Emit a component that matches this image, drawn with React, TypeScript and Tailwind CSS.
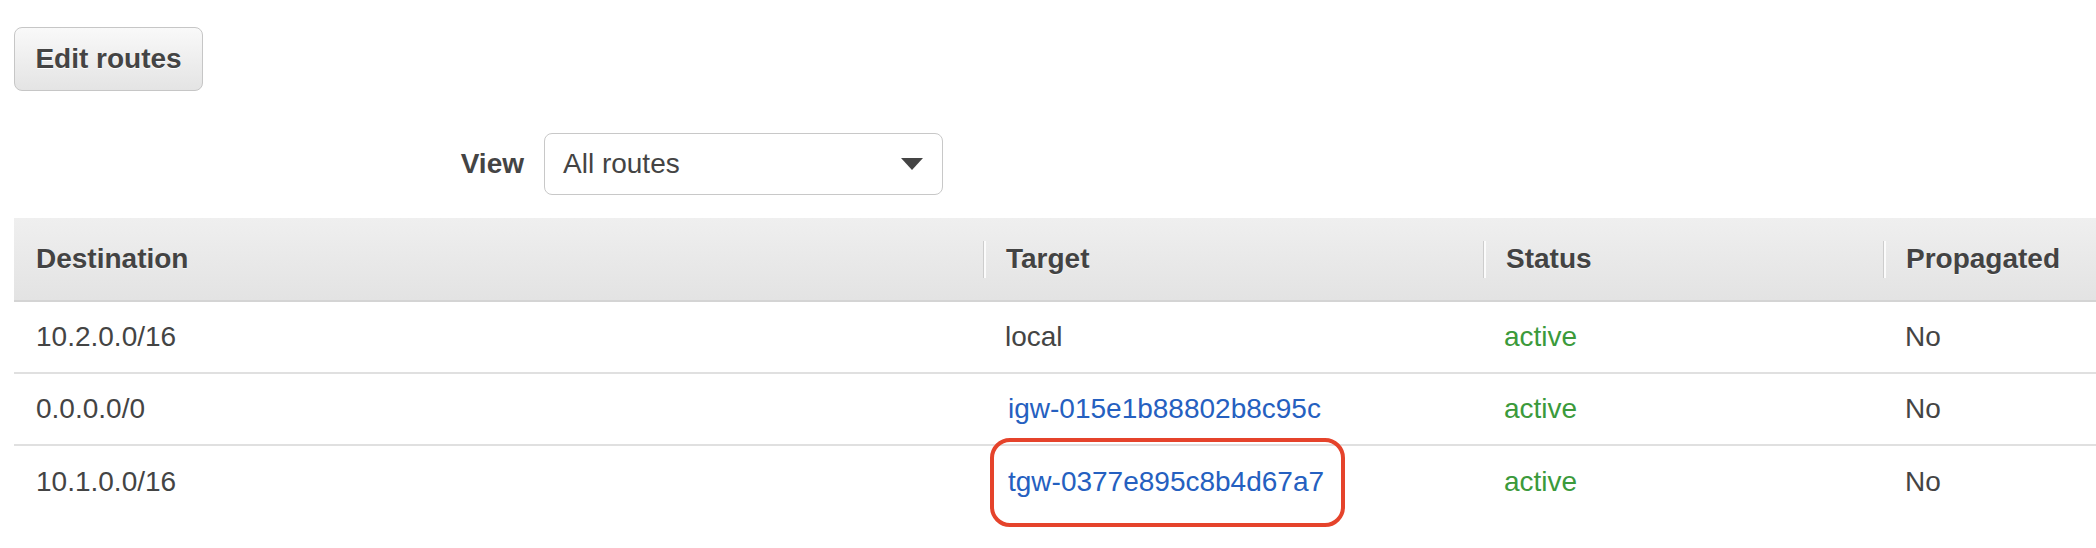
import React from "react";

type Row = {
  dest: string;
  target: string;
  link: boolean;
  highlight?: boolean;
};

const rows: Row[] = [
  { dest: "10.2.0.0/16", target: "local", link: false },
  { dest: "0.0.0.0/0", target: "igw-015e1b88802b8c95c", link: true },
  { dest: "10.1.0.0/16", target: "tgw-0377e895c8b4d67a7", link: true, highlight: true },
];

function HeaderCell({ label, sep }: { label: string; sep: boolean }) {
  return (
    <div className="flex h-full items-center">
      {sep ? (
        <div className="flex h-[37px]">
          <div className="h-full w-px bg-[#cdcdcd]" />
          <div className="h-full w-[2px] bg-[#fbfbfb]" />
        </div>
      ) : null}
      <span
        className={
          sep
            ? "ml-[20px] text-[28px] font-bold leading-none text-[#434343] [text-shadow:0_1px_0_#f6f6f6]"
            : "ml-[22px] text-[28px] font-bold leading-none text-[#434343] [text-shadow:0_1px_0_#f6f6f6]"
        }
      >
        {label}
      </span>
    </div>
  );
}

export default function App() {
  return (
    <div className="h-[548px] w-full overflow-hidden bg-white font-['Liberation_Sans',Arial,sans-serif] text-[#444]">
      <div className="pl-[14px] pt-[27px]">
        <button className="flex h-[64px] w-[189px] items-center justify-center rounded-[8px] border border-[#c6c6c6] bg-gradient-to-b from-[#f9f9f9] to-[#e4e4e4] text-[28px] font-bold leading-none text-[#444] [text-shadow:0_1px_0_#fff]">
          Edit routes
        </button>
      </div>

      <div className="mt-[42px] flex w-[943px] items-center justify-end">
        <span className="text-[28px] font-bold leading-none text-[#444]">View</span>
        <div className="ml-[20px] flex h-[62px] w-[399px] items-center justify-between rounded-[8px] border border-[#c8c8c8] bg-white pl-[18px] pr-[19px]">
          <span className="text-[28px] leading-none text-[#444]">All routes</span>
          <svg width="22" height="12" viewBox="0 0 22 12">
            <polygon points="0,0 22,0 11,12" fill="#444" />
          </svg>
        </div>
      </div>

      <div className="ml-[14px] mt-[23px]">
        <div className="grid h-[84px] grid-cols-[969px_500px_400px_1fr] border-b-2 border-[#d4d4d4] bg-gradient-to-b from-[#efefef] to-[#e3e3e3]">
          <HeaderCell label="Destination" sep={false} />
          <HeaderCell label="Target" sep={true} />
          <HeaderCell label="Status" sep={true} />
          <HeaderCell label="Propagated" sep={true} />
        </div>

        {rows.map((r, i) => (
          <div
            key={r.dest}
            className={
              i < rows.length - 1
                ? "grid h-[72px] grid-cols-[969px_500px_400px_1fr] border-b-2 border-[#e0e0e0]"
                : "grid h-[72px] grid-cols-[969px_500px_400px_1fr]"
            }
          >
            <div className="flex items-center pl-[22px] text-[28px] leading-none text-[#444]">
              {r.dest}
            </div>
            <div className="relative flex items-center pl-[22px] text-[28px] leading-none">
              {r.link ? (
                <span className="pl-[3px] text-[#2560c0]">{r.target}</span>
              ) : (
                <span className="text-[#444]">{r.target}</span>
              )}
              {r.highlight ? (
                <div className="absolute left-[7px] top-[-8px] h-[89px] w-[355px] rounded-[20px] border-4 border-[#e5432b]" />
              ) : null}
            </div>
            <div className="flex items-center pl-[21px] text-[28px] leading-none text-[#3b9a3b]">
              active
            </div>
            <div className="flex items-center pl-[22px] text-[28px] leading-none text-[#444]">
              No
            </div>
          </div>
        ))}
      </div>
    </div>
  );
}
